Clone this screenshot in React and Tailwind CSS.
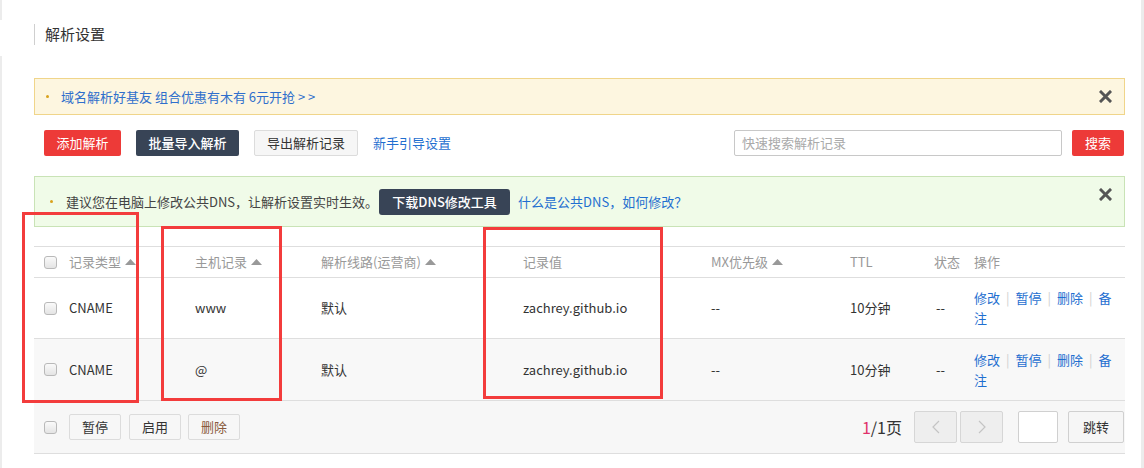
import React from "react";

const font = "font-['Noto_Sans_CJK_SC','Noto_Sans',sans-serif]";

function Close() {
  return (
    <svg width="13" height="13" viewBox="0 0 13 13" className="text-[#555]">
      <path d="M2 2 L11 11 M11 2 L2 11" stroke="currentColor" strokeWidth="3" strokeLinecap="square" />
    </svg>
  );
}

function SortUp() {
  return (
    <svg width="11" height="6" viewBox="0 0 11 6" className="ml-[4px] text-[#999]">
      <path d="M0 6 L5.5 0 L11 6Z" fill="currentColor" />
    </svg>
  );
}

function Check() {
  return <span className="block w-[13px] h-[13px] rounded-[3px] border border-[#b9b9b9] bg-gradient-to-b from-[#fafafa] to-[#e4e4e4]" />;
}

function Dot({ color }) {
  return <span className={`w-[3px] h-[3px] rounded-full ${color}`} />;
}

const cols = "grid grid-cols-[35px_126px_126px_202px_188px_139px_84px_40px_150px] items-center";

function Ops() {
  const sep = <span className="mx-[6px] text-[#d0d0d0]">|</span>;
  return (
    <div className="text-[13px] leading-[20px] text-[#1f6fd0]">
      修改{sep}暂停{sep}删除{sep}备<br />注
    </div>
  );
}

function Row({ host, bg }) {
  return (
    <div className={`${cols} border-b border-[#dedede] text-[13px] text-[#333] ${bg}`}>
      <div className="pl-[10px]"><Check /></div>
      <div>CNAME</div>
      <div>{host}</div>
      <div>默认</div>
      <div>zachrey.github.io</div>
      <div>--</div>
      <div>10分钟</div>
      <div className="pl-[2px]">--</div>
      <Ops />
    </div>
  );
}

export default function App() {
  const btn = "h-[26px] px-[12px] flex items-center text-[13px]";
  return (
    <div className={`${font} relative w-[1144px] h-[468px] bg-white flex overflow-hidden`}>
      <div className="w-[2px] flex flex-col">
        <div className="h-[20px] bg-[#ececec]" />
        <div className="h-[36px]" />
        <div className="flex-1 bg-[#ececec]" />
      </div>

      <div className="w-[1139px] pl-[32px] pr-[16px] pt-[24px] flex flex-col">
        <div className="h-[21px] border-l border-[#cfcfcf] pl-[10px] flex items-center text-[15px] text-[#333]">解析设置</div>

        <div className="mt-[33px] h-[37px] border border-[#f0d58a] bg-[#fdf6e0] flex items-center pl-[11px] pr-[12px]">
          <Dot color="bg-[#d9a21c]" />
          <span className="ml-[12px] text-[13px] text-[#2f6fcc]">域名解析好基友 组合优惠有木有 6元开抢 &gt; &gt;</span>
          <span className="ml-auto"><Close /></span>
        </div>

        <div className="mt-[15px] flex items-center pl-[10px] pr-[1px]">
          <span className={`${btn} w-[77px] justify-center rounded-[2px] bg-[#ed3a38] text-white`}>添加解析</span>
          <span className={`${btn} ml-[15px] w-[103px] justify-center rounded-[2px] bg-[#384456] text-white font-medium`}>批量导入解析</span>
          <span className={`${btn} ml-[15px] w-[104px] justify-center rounded-[2px] border border-[#dcdcdc] bg-[#f6f6f6] text-[#333]`}>导出解析记录</span>
          <span className="ml-[15px] text-[13px] text-[#1f6fd0]">新手引导设置</span>
          <div className="ml-auto h-[26px] w-[328px] border border-[#c8c8c8] rounded-[2px] flex items-center px-[7px] text-[13px] text-[#aaa]">快速搜索解析记录</div>
          <span className={`${btn} ml-[10px] w-[52px] justify-center rounded-[2px] bg-[#ed3a38] text-white`}>搜索</span>
        </div>

        <div className="mt-[20px] h-[51px] border border-[#c9e3b6] bg-[#f0fbe8] flex items-start pl-[15px] pr-[12px]">
          <div className="h-full flex items-center">
            <Dot color="bg-[#d9a21c]" />
            <span className="ml-[13px] text-[13px] text-[#444]">建议您在电脑上修改公共DNS，让解析设置实时生效。</span>
            <span className="ml-[1px] h-[26px] w-[131px] flex items-center justify-center rounded-[3px] bg-[#384456] text-white text-[13px] font-medium">下载DNS修改工具</span>
            <span className="ml-[8px] text-[13px] text-[#1f6fd0]">什么是公共DNS，如何修改？</span>
          </div>
          <span className="ml-auto mt-[11px]"><Close /></span>
        </div>

        <div className="mt-[19px] w-[1091px]">
          <div className={`${cols} h-[32px] border-t border-b border-[#dedede] text-[13px] text-[#999]`}>
            <div className="pl-[10px]"><Check /></div>
            <div className="flex items-center">记录类型<SortUp /></div>
            <div className="flex items-center">主机记录<SortUp /></div>
            <div className="flex items-center">解析线路(运营商)<SortUp /></div>
            <div>记录值</div>
            <div className="flex items-center">MX优先级<SortUp /></div>
            <div>TTL</div>
            <div>状态</div>
            <div>操作</div>
          </div>
          <div className="h-[61px] flex flex-col [&>div]:h-full"><Row host="www" bg="bg-white" /></div>
          <div className="h-[62px] flex flex-col [&>div]:h-full"><Row host="@" bg="bg-[#f8f8f8]" /></div>
          <div className="h-[53px] border-b border-[#dedede] bg-[#f7f7f7] flex items-center pl-[10px]">
            <Check />
            <span className="ml-[12px] h-[26px] w-[52px] flex items-center justify-center border border-[#dcdcdc] rounded-[2px] text-[13px] text-[#333]">暂停</span>
            <span className="ml-[8px] h-[26px] w-[52px] flex items-center justify-center border border-[#dcdcdc] rounded-[2px] text-[13px] text-[#333]">启用</span>
            <span className="ml-[7px] h-[26px] w-[52px] flex items-center justify-center border border-[#dcdcdc] rounded-[2px] text-[13px] text-[#8a5a3c]">删除</span>
            <span className="ml-auto text-[16px] text-[#333]"><span className="text-[#e0306a]">1</span>/1页</span>
            <span className="ml-[12px] h-[32px] w-[43px] flex items-center justify-center border border-[#d6d6d6] rounded-[2px] bg-[#eeeeee]">
              <svg width="8" height="14" viewBox="0 0 8 14"><path d="M7 1 L1 7 L7 13" fill="none" stroke="#c4c4c4" strokeWidth="1.2" /></svg>
            </span>
            <span className="ml-[3px] h-[32px] w-[43px] flex items-center justify-center border border-[#d6d6d6] rounded-[2px] bg-[#eeeeee]">
              <svg width="8" height="14" viewBox="0 0 8 14"><path d="M1 1 L7 7 L1 13" fill="none" stroke="#c4c4c4" strokeWidth="1.2" /></svg>
            </span>
            <span className="ml-[15px] h-[32px] w-[40px] border border-[#d0d0d0] rounded-[2px] bg-white" />
            <span className="ml-[10px] mr-[1px] h-[32px] w-[56px] flex items-center justify-center border border-[#d0d0d0] rounded-[2px] bg-[#f6f6f6] text-[13px] text-[#333]">跳转</span>
          </div>
        </div>
      </div>

      <div className="w-[3px] bg-[#ececec]" />

      <div className="absolute left-[22px] top-[212px] w-[117px] h-[191px] border-[3px] border-[#f33c3c]" />
      <div className="absolute left-[161px] top-[226px] w-[121px] h-[175px] border-[3px] border-[#f33c3c]" />
      <div className="absolute left-[483px] top-[227px] w-[180px] h-[172px] border-[3px] border-[#f33c3c]" />
    </div>
  );
}
